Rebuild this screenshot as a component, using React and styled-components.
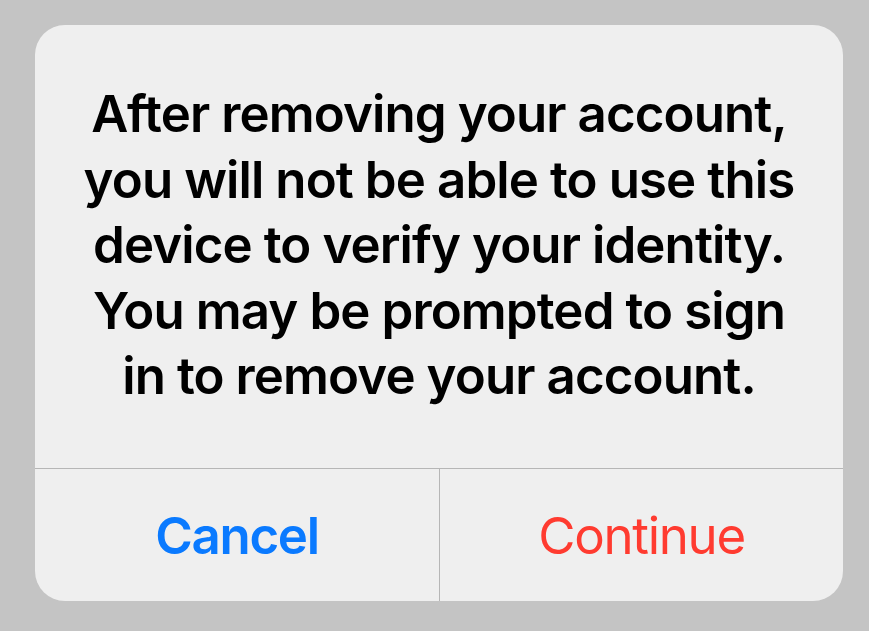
import React from "react";
import styled, { createGlobalStyle } from "styled-components";

const Global = createGlobalStyle`
  html, body {
    margin: 0;
    padding: 0;
    background: #c4c4c4;
    height: 100%;
  }
  body {
    font-family: Inter, "Noto Sans", "Liberation Sans", sans-serif;
    -webkit-font-smoothing: antialiased;
  }
`;

const Page = styled.div`
  width: 869px;
  height: 631px;
  box-sizing: border-box;
  padding: 25px 26px 0 35px;
  display: flex;
  align-items: flex-start;
  overflow: hidden;
`;

const Alert = styled.div`
  width: 808px;
  background: #efefef;
  border-radius: 30px;
  overflow: hidden;
  display: flex;
  flex-direction: column;
`;

const Message = styled.div`
  padding: 56px 10px 59px;
  text-align: center;
  font-size: 51px;
  font-weight: 600;
  letter-spacing: -0.9px;
  line-height: 65.5px;
  color: #000;
  white-space: nowrap;
  border-bottom: 1px solid #b6b6b6;
`;

const Actions = styled.div`
  display: grid;
  grid-template-columns: 1fr 1fr;
  height: 132px;
`;

const Action = styled.button`
  appearance: none;
  border: none;
  background: transparent;
  margin: 0;
  padding: 2px 0 0;
  font-family: Inter, "Noto Sans", "Liberation Sans", sans-serif;
  font-size: 51px;
  letter-spacing: -1.3px;
  font-weight: ${(p) => (p.$bold ? 600 : 400)};
  color: ${(p) => p.$color};
  display: flex;
  align-items: center;
  justify-content: center;
  cursor: pointer;
  & + & {
    border-left: 1px solid #b6b6b6;
  }
`;

export default function App() {
  return (
    <>
      <Global />
      <Page>
        <Alert>
          <Message>
            After removing your account,
            <br />
            you will not be able to use this
            <br />
            device to verify your identity.
            <br />
            You may be prompted to sign
            <br />
            in to remove your account.
          </Message>
          <Actions>
            <Action $bold $color="#0a7aff">Cancel</Action>
            <Action $color="#ff3b30">Continue</Action>
          </Actions>
        </Alert>
      </Page>
    </>
  );
}
